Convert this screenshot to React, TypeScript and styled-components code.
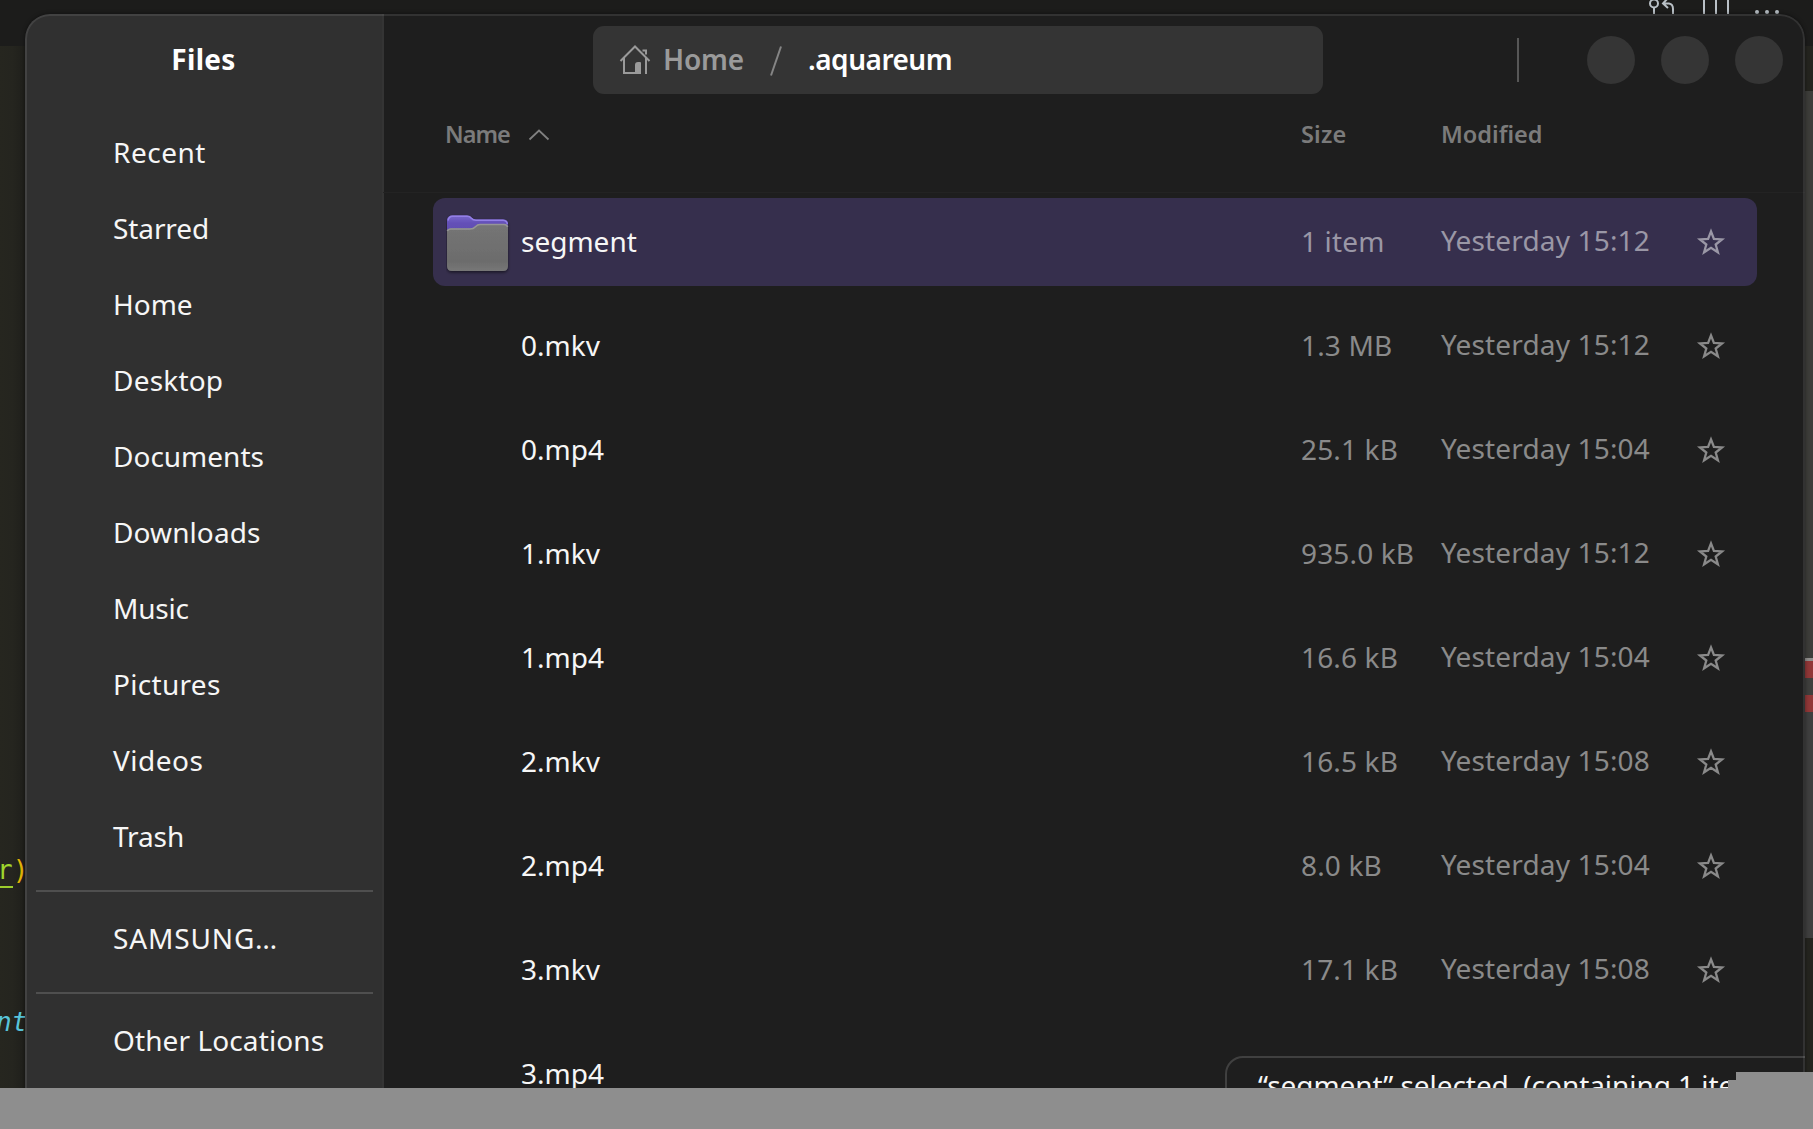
import React from 'react';
import styled, { createGlobalStyle, css } from 'styled-components';

const GlobalStyle = createGlobalStyle`
  * { box-sizing: border-box; }
  body { margin: 0; background: #8e8e8e; font-family: "Noto Sans", "Open Sans", sans-serif; overflow: hidden; }
`;

const Page = styled.div`
  display: grid;
  grid-template-rows: 1088px 41px;
  width: 1813px;
  height: 1129px;
  overflow: hidden;
  background: #8e8e8e;
`;

const Desktop = styled.div`
  position: relative;
  overflow: hidden;
  background: #1c1c1a;
`;

/* ---- editor behind the window ---- */
const Editor = styled.div`
  display: flex;
  flex-direction: column;
  height: 100%;
`;

const EditorTabs = styled.div`
  flex: 0 0 46px;
  display: flex;
  padding-left: 1640px;
  background: #1c1c1b;
`;

const EditorBody = styled.div`
  flex: 1;
  display: flex;
  justify-content: space-between;
  background: #24241f;
`;

const CodeEdge = styled.div`
  width: 25px;
  overflow: hidden;
  padding-top: 806px;
  display: flex;
  flex-direction: column;
  gap: 116px;
  background: linear-gradient(90deg, #26261f 0%, #25251f 50%, #1f1f1b 100%);
  font: 26px/36px "DejaVu Sans Mono", monospace;
  white-space: pre;
`;

const CodeLine = styled.div<{ $shift: number }>`
  height: 36px;
  margin-left: ${(p) => p.$shift}px;
`;

const Ident = styled.span`
  display: inline-block;
  height: 36px;
  color: #a0d62c;
  border-bottom: 2px solid #9ccc2c;
`;

const Paren = styled.span`
  color: #e3b505;
`;

const Keyword = styled.span`
  color: #58c4da;
  font-style: italic;
`;

const Ruler = styled.div`
  width: 8px;
  display: flex;
  flex-direction: column;
  padding-top: 45px;
`;

const RulerPart = styled.div<{ $h: number; $c: string }>`
  height: ${(p) => p.$h}px;
  background: ${(p) => p.$c};
`;

/* ---- file manager window ---- */
const Window = styled.div`
  position: absolute;
  left: 25px;
  top: 14px;
  width: 1780px;
  height: 1140px;
  display: flex;
  border-radius: 25px;
  overflow: hidden;
  background: #1e1e1e;
  box-shadow: 0 0 4px rgba(0, 0, 0, 0.45);

  &::after {
    content: '';
    position: absolute;
    inset: 0;
    border: 2px solid rgba(255, 255, 255, 0.09);
    border-radius: 25px;
    pointer-events: none;
  }
`;

const Sidebar = styled.aside`
  width: 359px;
  display: flex;
  flex-direction: column;
  background: #303030;
  border-right: 2px solid #343434;
`;

const AppTitle = styled.div`
  height: 91px;
  line-height: 91px;
  margin-bottom: 10px;
  text-align: center;
  font-size: 28px;
  font-weight: 700;
  letter-spacing: 0.3px;
  color: #fff;
`;

const Place = styled.div<{ $track: number }>`
  height: 76px;
  padding-left: 88px;
  line-height: 75px;
  font-size: 28px;
  font-weight: 400;
  letter-spacing: ${(p) => p.$track}px;
  color: #f6f6f6;
  white-space: nowrap;
`;

const Divider = styled.div`
  flex: 0 0 2px;
  margin: 15px 9px 9px 11px;
  background: #4f4f4f;
`;

const Main = styled.main`
  flex: 1;
  display: flex;
  flex-direction: column;
  margin-left: -1px;
`;

const HeaderBar = styled.header`
  height: 91px;
  display: flex;
  align-items: center;
  padding: 0 22px 0 210px;
`;

const PathBar = styled.div`
  width: 730px;
  height: 68px;
  display: flex;
  align-items: center;
  padding-left: 26px;
  border-radius: 11px;
  background: #343434;
  font-size: 28px;
  font-weight: 600;
  white-space: nowrap;
`;

const Crumb = styled.span<{ $current?: boolean }>`
  height: 68px;
  line-height: 66px;
  color: ${(p) => (p.$current ? '#ffffff' : '#9a9a9a')};
  ${(p) =>
    p.$current
      ? css`
          margin-left: 25px;
          letter-spacing: -0.5px;
        `
      : css`
          margin-left: 8px;
          width: 106px;
          letter-spacing: -0.2px;
        `}
`;

const Bar = styled.div`
  width: 2px;
  height: 44px;
  margin-left: 194px;
  background: #575757;
`;

const Buttons = styled.div`
  margin-left: auto;
  display: flex;
  gap: 26px;
`;

const RoundButton = styled.div`
  width: 48px;
  height: 48px;
  border-radius: 50%;
  background: #353535;
`;

const rowGrid = css`
  display: grid;
  grid-template-columns: 78px 780px 140px 254px 1fr;
`;

const Columns = styled.div`
  ${rowGrid}
  align-items: start;
  height: 88px;
  padding: 9px 0 0 60px;
  line-height: 41px;
  font-size: 23.5px;
  font-weight: 600;
  color: #7b7b7b;
  border-bottom: 1px solid #232323;
`;

const Column = styled.div<{ $track?: number }>`
  display: flex;
  align-items: center;
  gap: 18px;
  letter-spacing: ${(p) => p.$track ?? 0}px;
`;

const NameColumn = styled(Column)`
  grid-column: 1 / 3;
  padding-left: 2px;
`;

const Rows = styled.div`
  display: flex;
  flex-direction: column;
  gap: 16px;
  padding: 5px 48px 0 50px;
`;

const Row = styled.div<{ $selected?: boolean }>`
  ${rowGrid}
  height: 88px;
  padding-left: 10px;
  align-items: center;
  border-radius: 12px;
  background: ${(p) => (p.$selected ? '#362f4d' : 'transparent')};
  color: ${(p) => (p.$selected ? '#9a97a6' : '#8a8a8a')};
  font-size: 28px;
  font-weight: 400;
  white-space: nowrap;
`;

const FolderCell = styled.div`
  height: 88px;
  padding: 14px 0 0 3px;
`;

const FileName = styled.div`
  height: 88px;
  line-height: 86px;
  letter-spacing: 0;
  color: #f6f6f6;
`;

const Size = styled.div`
  height: 88px;
  line-height: 86px;
  letter-spacing: 0.15px;
`;

const Modified = styled.div`
  height: 88px;
  line-height: 84px;
  letter-spacing: 0.15px;
`;

const StatusBar = styled.div`
  position: absolute;
  left: 1200px;
  top: 1042px;
  width: 600px;
  height: 80px;
  padding-left: 31px;
  border: 2px solid #404040;
  border-radius: 18px 0 0 0;
  background: #1e1e1e;
  font-size: 28px;
  font-weight: 400;
  line-height: 54px;
  letter-spacing: -0.05px;
  color: #f6f6f6;
  white-space: pre;
`;

const Notch = styled.div<{ $x: number; $y: number }>`
  position: absolute;
  left: ${(p) => p.$x}px;
  top: ${(p) => p.$y}px;
  right: 0;
  bottom: 0;
  background: #8e8e8e;
`;

const Star = () => (
  <svg width="32" height="32" viewBox="-16 -16 32 32">
    <path
      d="M0 -10.6 L2.9 -3 L11 -2.6 L4.7 2.5 L6.9 10.3 L0 5.9 L-6.9 10.3 L-4.7 2.5 L-11 -2.6 L-2.9 -3 Z"
      fill="none"
      stroke="currentColor"
      strokeWidth="2.3"
      strokeMiterlimit="8"
    />
  </svg>
);

const Folder = () => (
  <svg width="66" height="64" viewBox="0 0 66 64">
    <defs>
      <linearGradient id="back" x1="0" y1="0" x2="0" y2="1">
        <stop offset="0" stopColor="#7a68cc" />
        <stop offset="0.2" stopColor="#6450b8" />
        <stop offset="1" stopColor="#54459c" />
      </linearGradient>
      <linearGradient id="front" x1="0" y1="0" x2="0" y2="1">
        <stop offset="0" stopColor="#757575" />
        <stop offset="0.8" stopColor="#6c6c6c" />
        <stop offset="1" stopColor="#777777" />
      </linearGradient>
      <filter id="shade" x="-10%" y="-10%" width="120%" height="125%">
        <feDropShadow dx="0" dy="1.5" stdDeviation="1.5" floodColor="#000" floodOpacity="0.55" />
      </filter>
    </defs>
    <g filter="url(#shade)">
      <path d="M1 9 Q1 3.5 6.5 3.5 H21 Q24 3.5 25.5 5.5 Q27 7.5 30 7.5 H57 Q62 7.5 62 12.5 V40 H1 Z" fill="url(#back)" />
      <path d="M2 8.5 Q3 4.3 6.5 4.3 H21 Q24 4.3 25 6 Q27 8.3 30 8.3 H57 Q61 8.6 61.3 12" fill="none" stroke="#937fe6" strokeWidth="1.5" />
      <path d="M1 19 Q1 16.5 5 16.5 H24 Q27 16.5 29 14.2 Q31 12 34 12 H58 Q62 12 62 16 V54 Q62 59 57 59 H6 Q1 59 1 54 Z" fill="url(#front)" />
      <path d="M1.5 19 Q2 17 5 17 H24 Q27.5 17 29.5 14.7 Q31.5 12.6 34 12.6 H58 Q61 12.8 61.5 15" fill="none" stroke="#959595" strokeWidth="1.5" />
    </g>
  </svg>
);

const HomeIcon = () => (
  <svg width="36" height="34" viewBox="0 0 36 34" fill="none" stroke="#9a9a9a" strokeWidth="2">
    <path d="M1.5 18 L16 3.5 L30.5 18" />
    <path d="M5 14.5 V30 H18" />
    <path d="M27 14.5 V31" />
    <path d="M23.5 7.5 H27 V11.5" />
    <path d="M16 31 V22 Q16 19 19 19 H21 Q22 19 22 20 V31 Z" fill="#9a9a9a" stroke="none" />
  </svg>
);

const Slash = () => (
  <svg width="14" height="32" viewBox="0 0 14 32">
    <path d="M2 31.5 L12 2.5" stroke="#858585" strokeWidth="2" />
  </svg>
);

const Caret = () => (
  <svg width="22" height="12" viewBox="0 0 22 12">
    <path d="M1.5 10.5 L11 1.5 L20.5 10.5" fill="none" stroke="#808080" strokeWidth="1.8" />
  </svg>
);

const EditorActions = () => (
  <svg width="150" height="16" viewBox="0 0 150 16" fill="none" stroke="#b9c0c6" strokeWidth="2">
    <circle cx="14" cy="3.5" r="4" />
    <path d="M14 7.5 V16" />
    <path d="M28 -2 L23 3.5 L28 8 M23 3.5 H29 Q33 4 33 9 V16" />
    <path d="M64 0 V16 M76 0 V16 M88 0 V16" />
    <g fill="#b9c0c6" stroke="none">
      <circle cx="117" cy="12" r="2" />
      <circle cx="127" cy="12" r="2" />
      <circle cx="137" cy="12" r="2" />
    </g>
  </svg>
);

const places: [string, number][] = [
  ['Recent', 0.5],
  ['Starred', -0.1],
  ['Home', 0],
  ['Desktop', 0.2],
  ['Documents', 0],
  ['Downloads', 0.1],
  ['Music', -0.2],
  ['Pictures', 0.3],
  ['Videos', 0.5],
  ['Trash', -0.1],
];

const files: [string, string, string][] = [
  ['segment', '1 item', '15:12'],
  ['0.mkv', '1.3 MB', '15:12'],
  ['0.mp4', '25.1 kB', '15:04'],
  ['1.mkv', '935.0 kB', '15:12'],
  ['1.mp4', '16.6 kB', '15:04'],
  ['2.mkv', '16.5 kB', '15:08'],
  ['2.mp4', '8.0 kB', '15:04'],
  ['3.mkv', '17.1 kB', '15:08'],
];

export default function App() {
  return (
    <Page>
      <GlobalStyle />
      <Desktop>
        <Editor>
          <EditorTabs>
            <EditorActions />
          </EditorTabs>
          <EditorBody>
            <CodeEdge>
              <CodeLine $shift={-3}>
                <Ident>r</Ident>
                <Paren>)</Paren>
              </CodeLine>
              <CodeLine $shift={-4}>
                <Keyword>nt</Keyword>
              </CodeLine>
            </CodeEdge>
            <Ruler>
              <RulerPart $h={567} $c="#3d3d3a" />
              <RulerPart $h={3} $c="#908e8c" />
              <RulerPart $h={17} $c="#913838" />
              <RulerPart $h={17} $c="#3f3f3d" />
              <RulerPart $h={17} $c="#913838" />
              <RulerPart $h={226} $c="#3f3f3f" />
            </Ruler>
          </EditorBody>
        </Editor>

        <Window>
          <Sidebar>
            <AppTitle>Files</AppTitle>
            {places.map(([name, track]) => (
              <Place key={name} $track={track}>
                {name}
              </Place>
            ))}
            <Divider />
            <Place $track={0.85}>SAMSUNG…</Place>
            <Divider />
            <Place $track={0.1}>Other Locations</Place>
          </Sidebar>

          <Main>
            <HeaderBar>
              <PathBar>
                <HomeIcon />
                <Crumb>Home</Crumb>
                <Slash />
                <Crumb $current>.aquareum</Crumb>
              </PathBar>
              <Bar />
              <Buttons>
                <RoundButton />
                <RoundButton />
                <RoundButton />
              </Buttons>
            </HeaderBar>
            <Columns>
              <NameColumn $track={-1}>
                Name <Caret />
              </NameColumn>
              <Column $track={0.2}>Size</Column>
              <Column>Modified</Column>
            </Columns>
            <Rows>
              {files.map(([name, size, time], i) => (
                <Row key={name} $selected={i === 0}>
                  <FolderCell>{i === 0 && <Folder />}</FolderCell>
                  <FileName>{name}</FileName>
                  <Size>{size}</Size>
                  <Modified>Yesterday {time}</Modified>
                  <Star />
                </Row>
              ))}
              <Row>
                <FolderCell />
                <FileName>3.mp4</FileName>
              </Row>
            </Rows>
          </Main>

          <StatusBar>“segment” selected  (containing 1 item)</StatusBar>
        </Window>

        <Notch $x={1736} $y={1072} />
        <Notch $x={1728} $y={1080} />
      </Desktop>
    </Page>
  );
}
